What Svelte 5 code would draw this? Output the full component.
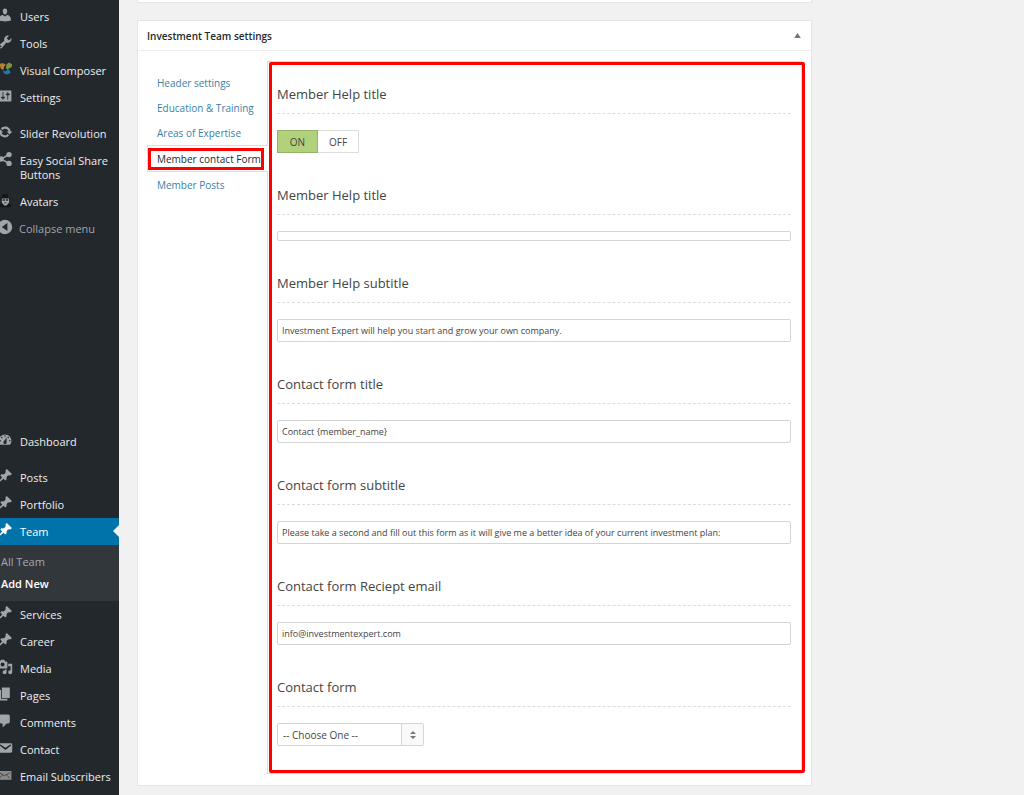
<script>
	const pin =
		"M10.44 3.02l1.82-1.82 6.36 6.35-1.83 1.82c-1.05-.68-2.48-.57-3.41.36l-.75.75c-.92.93-1.04 2.35-.35 3.41l-1.83 1.82-2.41-2.41-2.8 2.79c-.42.42-3.38 2.71-3.8 2.29s1.86-3.39 2.28-3.81l2.79-2.79L4.1 9.36l1.83-1.82c1.05.69 2.48.57 3.4-.36l.75-.75c.93-.92 1.05-2.35.36-3.41z";
	const mail =
		"M3.87 4h13.25C18.37 4 19 4.59 19 5.79v8.42c0 1.19-.63 1.79-1.88 1.79H3.87c-1.25 0-1.88-.6-1.88-1.79V5.79c0-1.2.63-1.79 1.88-1.79zm6.62 8.6l6.74-5.53c.24-.2.43-.66.13-1.07-.29-.41-.82-.42-1.17-.17l-5.7 3.86L4.8 5.83c-.35-.25-.88-.24-1.17.17-.3.41-.11.87.13 1.07z";

	const groups = [
		[
			{
				name: "Users",
				icon: "M10 9.25c-2.27 0-2.73-3.44-2.73-3.44C7 4.02 7.82 2 9.97 2c2.16 0 2.98 2.02 2.71 3.81 0 0-.41 3.44-2.68 3.44zm0 2.57L12.72 10c2.39 0 4.52 2.33 4.52 4.53v2.49s-3.65 1.13-7.24 1.13c-3.65 0-7.24-1.13-7.24-1.13v-2.49c0-2.25 1.94-4.48 4.47-4.48z",
			},
			{
				name: "Tools",
				icon: "M16.68 9.77c-1.34 1.34-3.3 1.67-4.95.99l-5.41 6.52c-.99.99-2.59.99-3.58 0s-.99-2.59 0-3.57l6.52-5.42c-.68-1.65-.35-3.61.99-4.95 1.28-1.28 3.12-1.62 4.72-1.06l-2.89 2.89 2.82 2.82 2.86-2.87c.53 1.58.18 3.39-1.08 4.65zM3.81 16.21c.4.39 1.04.39 1.43 0 .4-.4.4-1.04 0-1.43-.39-.4-1.03-.4-1.43 0-.39.39-.39 1.03 0 1.43z",
			},
			{ name: "Visual Composer", type: "composer" },
			{
				name: "Settings",
				icon: "M18 16V4c0-.55-.45-1-1-1H3c-.55 0-1 .45-1 1v12c0 .55.45 1 1 1h14c.55 0 1-.45 1-1zM8 11h1c.55 0 1 .45 1 1s-.45 1-1 1H8v1.5c0 .28-.22.5-.5.5s-.5-.22-.5-.5V13H6c-.55 0-1-.45-1-1s.45-1 1-1h1V5.5c0-.28.22-.5.5-.5s.5.22.5.5V11zm5-2h-1c-.55 0-1-.45-1-1s.45-1 1-1h1V5.5c0-.28.22-.5.5-.5s.5.22.5.5V7h1c.55 0 1 .45 1 1s-.45 1-1 1h-1v5.5c0 .28-.22.5-.5.5s-.5-.22-.5-.5V9z",
			},
		],
		[
			{
				name: "Slider Revolution",
				icon: "M10.2 3.28c3.53 0 6.43 2.61 6.92 6h2.08l-3.5 4-3.5-4h2.32c-.45-1.97-2.21-3.45-4.32-3.45-1.45 0-2.73.71-3.54 1.78L4.95 5.66C6.23 4.2 8.11 3.28 10.2 3.28zm-.4 13.44c-3.52 0-6.43-2.61-6.92-6H.8l3.5-4c1.17 1.33 2.33 2.67 3.5 4H5.48c.45 1.97 2.21 3.45 4.32 3.45 1.45 0 2.73-.71 3.54-1.78l1.71 1.95c-1.28 1.46-3.15 2.38-5.25 2.38z",
			},
			{ name: "Easy Social Share Buttons", type: "share" },
			{ name: "Avatars", type: "avatar" },
			{ name: "Collapse menu", type: "collapse" },
		],
		[
			{
				name: "Dashboard",
				icon: "M3.76 16h12.48c1.1-1.37 1.76-3.11 1.76-5 0-4.42-3.58-8-8-8s-8 3.58-8 8c0 1.89.66 3.63 1.76 5zM10 4c.55 0 1 .45 1 1s-.45 1-1 1-1-.45-1-1 .45-1 1-1zM6 6c.55 0 1 .45 1 1s-.45 1-1 1-1-.45-1-1 .45-1 1-1zm8 0c.55 0 1 .45 1 1s-.45 1-1 1-1-.45-1-1 .45-1 1-1zm-5.37 5.55L12 7v6c0 1.1-.9 2-2 2s-2-.9-2-2c0-.57.24-1.08.63-1.45zM4 10c.55 0 1 .45 1 1s-.45 1-1 1-1-.45-1-1 .45-1 1-1zm12 0c.55 0 1 .45 1 1s-.45 1-1 1-1-.45-1-1 .45-1 1-1z",
			},
		],
		[
			{ name: "Posts", icon: pin },
			{ name: "Portfolio", icon: pin },
			{ name: "Team", icon: pin, active: true, sub: ["All Team", "Add New"] },
			{ name: "Services", icon: pin },
			{ name: "Career", icon: pin },
			{
				name: "Media",
				icon: "M13 11V4c0-.55-.45-1-1-1h-1.67L9 1H5L3.67 3H2c-.55 0-1 .45-1 1v7c0 .55.45 1 1 1h10c.55 0 1-.45 1-1zM7 4.5c1.38 0 2.5 1.12 2.5 2.5S8.38 9.5 7 9.5 4.5 8.38 4.5 7 5.62 4.5 7 4.5zM14 6h5v10.5c0 1.38-1.12 2.5-2.5 2.5S14 17.88 14 16.5s1.12-2.5 2.5-2.5c.17 0 .34.02.5.05V9h-3V6zm-4 8.05V13h2v3.5c0 1.38-1.12 2.5-2.5 2.5S7 17.88 7 16.5 8.12 14 9.5 14c.17 0 .34.02.5.05z",
			},
			{ name: "Pages", icon: "M6 15V2h10v13H6zm-1 1h8v2H3V5h2v11z" },
			{
				name: "Comments",
				icon: "M5 2h9c1.1 0 2 .9 2 2v7c0 1.1-.9 2-2 2h-2l-5 5v-5H5c-1.1 0-2-.9-2-2V4c0-1.1.9-2 2-2z",
			},
			{ name: "Contact", icon: mail },
			{ name: "Email Subscribers", type: "letter" },
		],
	];

	const tabs = [
		"Header settings",
		"Education & Training",
		"Areas of Expertise",
		"Member contact Form",
		"Member Posts",
	];
	let currentTab = "Member contact Form";

	let showHelp = true;
	let fields = [
		{ id: "help-title", label: "Member Help title", value: "", slim: true },
		{
			id: "help-subtitle",
			label: "Member Help subtitle",
			value: "Investment Expert will help you start and grow your own company.",
		},
		{
			id: "form-title",
			label: "Contact form title",
			value: "Contact {member_name}",
		},
		{
			id: "form-subtitle",
			label: "Contact form subtitle",
			value: "Please take a second and fill out this form as it will give me a better idea of your current investment plan:",
		},
		{
			id: "form-email",
			label: "Contact form Reciept email",
			value: "info@investmentexpert.com",
		},
	];
</script>

<div class="page">
	<nav class="sidebar">
		{#each groups as group, i}
			<ul class="group" class:lower={i === 2}>
				{#each group as item}
					<li>
						<a
							href="#menu"
							class="item"
							class:active={item.active}
							class:collapse={item.type === "collapse"}
						>
							<svg class="icon" viewBox="0 0 20 20" aria-hidden="true">
								{#if item.icon}
									<path d={item.icon} />
								{:else if item.type === "composer"}
									<path fill="#b9812f" d="M3 4c3-2 6-1 8 1l-2 2-1 4-3-1-1-3-3-1z" />
									<path fill="#7f9440" d="M12 4l3-2 4 2-1 4-3 1-1 2-3-2z" />
									<path fill="#1b7aa6" d="M7 12l4 1 2-3 3 2 1 3-4 2-4-1z" />
								{:else if item.type === "share"}
									<path
										d="M15 4.500L5 10l10 5.500"
										fill="none"
										stroke="currentColor"
										stroke-width="2"
									/>
									<circle cx="15" cy="4.500" r="3.400" />
									<circle cx="5" cy="10" r="3.400" />
									<circle cx="15" cy="15.500" r="3.400" />
								{:else if item.type === "avatar"}
									<path
										fill="#14171a"
										d="M6 7l1-5 3 1 3-1 1 5 4 1-3 2v5l3 1v3H1v-3l4-1v-5L2 8z"
									/>
									<path d="M6 8h9v5l-3 4H9l-3-4z" />
									<path fill="#23282d" d="M7 9h3v2H7zM11 9h3v2h-3zM9 13h3v1H9z" />
								{:else if item.type === "collapse"}
									<path
										fill-rule="evenodd"
										d="M10 1a9 9 0 1 0 0 18a9 9 0 0 0 0-18zM13 5v10l-7-5z"
									/>
								{:else}
									<path fill="#8c8c8c" d="M1 5h17v11H1z" />
									<path
										d="M3 7l6.500 4L16 7M3 14l4-4M16 14l-4-4"
										fill="none"
										stroke="#3b3f43"
										stroke-width="1.200"
									/>
								{/if}
							</svg>
							<span>{item.name}</span>
						</a>
						{#if item.sub}
							<ul class="submenu">
								{#each item.sub as sub}
									<li>
										<a href="#team" class:current={sub === "Add New"}>{sub}</a>
									</li>
								{/each}
							</ul>
						{/if}
					</li>
				{/each}
			</ul>
		{/each}
	</nav>

	<main>
		<div class="previous"></div>
		<section class="metabox">
			<header>
				<h2>Investment Team settings</h2>
				<button class="toggle" aria-label="Toggle panel">
					<svg viewBox="0 0 8 6" aria-hidden="true"><path d="M4 0l4 6H0z" /></svg>
				</button>
			</header>

			<div class="inside">
				<ul class="tabs">
					{#each tabs as tab}
						<li class:selected={tab === currentTab}>
							<button on:click={() => (currentTab = tab)}>{tab}</button>
						</li>
					{/each}
				</ul>

				<div class="panel">
					<!-- On / off switch -->
					<div class="field">
						<h3>Member Help title</h3>
						<div class="switch">
							<button class:on={showHelp} on:click={() => (showHelp = true)}
								>ON</button
							>
							<button class:on={!showHelp} on:click={() => (showHelp = false)}
								>OFF</button
							>
						</div>
					</div>

					<!-- Text fields -->
					{#each fields as field}
						<div class="field">
							<h3><label for={field.id}>{field.label}</label></h3>
							<input
								type="text"
								id={field.id}
								class:slim={field.slim}
								bind:value={field.value}
							/>
						</div>
					{/each}

					<!-- Form picker -->
					<div class="field">
						<h3><label for="form">Contact form</label></h3>
						<div class="select">
							<select id="form">
								<option>-- Choose One --</option>
							</select>
							<span class="arrows">
								<svg viewBox="0 0 6 8" aria-hidden="true">
									<path d="M3 0l3 3H0zM3 8l3-3H0z" />
								</svg>
							</span>
						</div>
					</div>
				</div>
			</div>
		</section>
	</main>
</div>

<style>
	:global(body) {
		margin: 0;
		background: #f1f1f1;
	}

	.page {
		display: flex;
		min-height: 100vh;
		background: #f1f1f1;
		color: #444;
		font-family: "Open Sans", "Noto Sans", sans-serif;
		font-size: 11px;
	}

	ul {
		list-style: none;
		margin: 0;
		padding: 0;
	}

	button,
	input,
	select {
		box-sizing: border-box;
		margin: 0;
		font-family: inherit;
		color: inherit;
	}

	.sidebar {
		flex: 0 0 119px;
		box-sizing: border-box;
		padding-top: 3px;
		background: #23282d;
		overflow: hidden;
	}

	.group {
		margin-bottom: 9px;
	}

	.group:last-child {
		margin-bottom: 0;
	}

	.lower {
		margin-top: 186px;
	}

	.item {
		position: relative;
		display: flex;
		gap: 7px;
		padding: 7px 8px 6px 0;
		line-height: 14px;
		color: #eee;
		text-decoration: none;
	}

	.icon {
		flex: none;
		width: 16px;
		height: 16px;
		margin: -3px 0 0 -3px;
		color: #a0a5aa;
		fill: currentColor;
	}

	.collapse {
		gap: 6px;
		color: #a0a5aa;
	}

	.active {
		background: #0073aa;
		color: #fff;
	}

	.active .icon {
		color: #fff;
	}

	.active::after {
		content: "";
		position: absolute;
		right: 0;
		top: 7px;
		border: 6px solid transparent;
		border-left-width: 0;
		border-right-color: #f1f1f1;
	}

	.submenu {
		padding: 6px 0;
		background: #32373c;
	}

	.submenu a {
		display: block;
		padding-left: 1px;
		line-height: 22px;
		color: #a5a9ad;
		text-decoration: none;
	}

	.submenu .current {
		color: #fff;
		font-weight: 600;
	}

	main {
		flex: 1;
		min-width: 0;
		padding: 0 212px 8px 18px;
	}

	.previous {
		height: 3px;
		margin-bottom: 17px;
		box-sizing: border-box;
		border: 1px solid #e5e5e5;
		border-top: 0;
		background: #fff;
	}

	.metabox {
		border: 1px solid #e5e5e5;
		background: #fff;
	}

	header {
		display: flex;
		align-items: center;
		justify-content: space-between;
		height: 29px;
		padding: 0 10px 0 9px;
		border-bottom: 1px solid #eee;
	}

	h2 {
		margin: 0;
		font-size: 10px;
		font-weight: 600;
		color: #23282d;
	}

	.toggle {
		display: flex;
		padding: 0;
		border: 0;
		background: none;
	}

	.toggle svg {
		width: 7px;
		height: 5px;
		fill: #72777c;
	}

	.inside {
		display: flex;
		padding: 10px 9px 11px 9px;
	}

	.tabs {
		flex: 0 0 121px;
		margin-right: -1px;
		padding-top: 9px;
		z-index: 1;
	}

	.tabs li {
		position: relative;
		padding-left: 10px;
	}

	.tabs button {
		display: block;
		height: 25px;
		padding: 0;
		border: 0;
		background: none;
		font-size: 10px;
		color: #3a7fa8;
		white-space: nowrap;
	}

	.tabs .selected {
		padding-left: 9px;
		border: 1px solid #ddd;
		border-right: 0;
		background: #fff;
	}

	.tabs .selected button {
		color: #23282d;
	}

	/* red marker round the open tab */
	.tabs .selected::after {
		content: "";
		position: absolute;
		inset: 2px 4px 1px 0;
		border: 3px solid #f00;
		pointer-events: none;
	}

	.panel {
		position: relative;
		flex: 1;
		min-width: 0;
		padding: 23px 10px 27px 9px;
		border: 1px solid #ddd;
	}

	.panel::after {
		content: "";
		position: absolute;
		inset: 0 -4px 0 1px;
		border: 3px solid #f00;
		border-radius: 2px;
		pointer-events: none;
	}

	.field {
		margin-bottom: 33px;
	}

	.field:last-child {
		margin-bottom: 0;
	}

	h3 {
		margin: 0 0 16px;
		padding-bottom: 10px;
		border-bottom: 1px dashed #ddd;
		font-size: 13px;
		font-weight: 400;
		line-height: 18px;
	}

	.switch {
		display: flex;
	}

	.switch button {
		width: 41px;
		height: 23px;
		padding: 0;
		border: 1px solid #ddd;
		background: #fff;
		font-size: 10px;
	}

	.switch .on {
		border-color: #95b365;
		background: #b1d17d;
	}

	.switch button + button:not(.on) {
		border-left: 0;
	}

	input {
		display: block;
		width: 100%;
		height: 23px;
		padding: 0 4px;
		border: 1px solid #d5d5d5;
		border-radius: 2px;
		background: #fff;
		font-size: 9px;
	}

	.slim {
		height: 10px;
	}

	.select {
		position: relative;
		width: 147px;
	}

	select {
		display: block;
		width: 100%;
		height: 23px;
		padding: 0 28px 0 5px;
		border: 1px solid #d5d5d5;
		border-radius: 2px;
		background: #fff;
		font-size: 10px;
		appearance: none;
	}

	.arrows {
		position: absolute;
		inset: 1px 1px 1px auto;
		display: flex;
		align-items: center;
		justify-content: center;
		width: 21px;
		border-left: 1px solid #d5d5d5;
		background: #f9f9f9;
		pointer-events: none;
	}

	.arrows svg {
		width: 6px;
		height: 8px;
		fill: #777;
	}
</style>
